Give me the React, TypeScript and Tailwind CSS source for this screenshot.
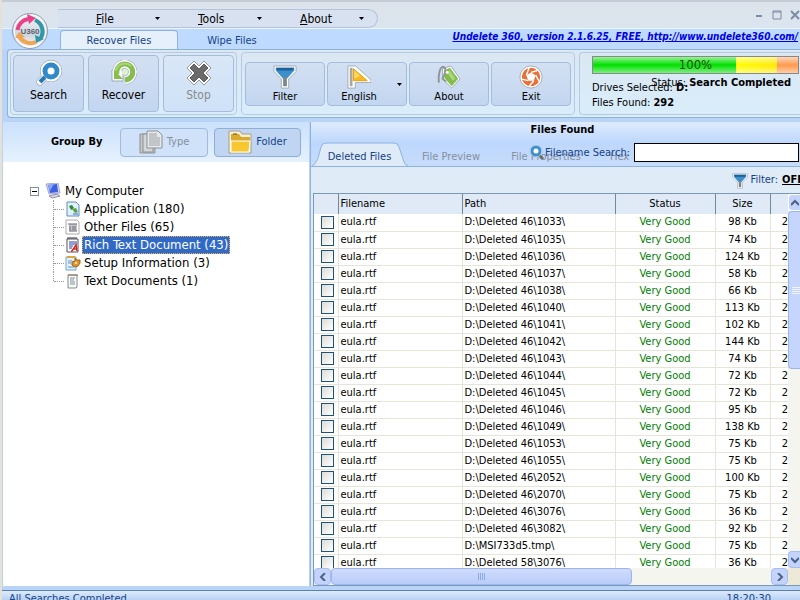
import React from "react";

type IconProps = { className?: string };

const files = [
  { path: "D:\\Deleted 46\\1033\\", size: 98 },
  { path: "D:\\Deleted 46\\1035\\", size: 74 },
  { path: "D:\\Deleted 46\\1036\\", size: 124 },
  { path: "D:\\Deleted 46\\1037\\", size: 58 },
  { path: "D:\\Deleted 46\\1038\\", size: 66 },
  { path: "D:\\Deleted 46\\1040\\", size: 113 },
  { path: "D:\\Deleted 46\\1041\\", size: 102 },
  { path: "D:\\Deleted 46\\1042\\", size: 144 },
  { path: "D:\\Deleted 46\\1043\\", size: 74 },
  { path: "D:\\Deleted 46\\1044\\", size: 72 },
  { path: "D:\\Deleted 46\\1045\\", size: 72 },
  { path: "D:\\Deleted 46\\1046\\", size: 95 },
  { path: "D:\\Deleted 46\\1049\\", size: 138 },
  { path: "D:\\Deleted 46\\1053\\", size: 75 },
  { path: "D:\\Deleted 46\\1055\\", size: 75 },
  { path: "D:\\Deleted 46\\2052\\", size: 100 },
  { path: "D:\\Deleted 46\\2070\\", size: 75 },
  { path: "D:\\Deleted 46\\3076\\", size: 36 },
  { path: "D:\\Deleted 46\\3082\\", size: 92 },
  { path: "D:\\MSI733d5.tmp\\", size: 75 },
  { path: "D:\\Deleted 58\\3076\\", size: 36 },
];

const Logo = () => (
  <svg className="h-10 w-10" viewBox="0 0 40 40">
    <defs>
      <linearGradient id="orb" x1="0" y1="0" x2="0" y2="1">
        <stop offset="0" stopColor="#f4f6f9" />
        <stop offset="0.6" stopColor="#cfd5de" />
        <stop offset="1" stopColor="#fafcff" />
      </linearGradient>
    </defs>
    <circle cx="20" cy="20" r="17.5" fill="url(#orb)" stroke="#8d9db4" />
    <circle cx="20" cy="20" r="16" fill="none" stroke="#fff" />
    <g fill="none" strokeWidth="4">
      <path d="M7.5 19a12.500 12.500 0 0 1 11-11" stroke="#e8418a" />
      <path d="M25 9a12.500 12.500 0 0 1 5 19" stroke="#2f97a6" />
      <path d="M26 31a13 13 0 0 1-17-6" stroke="#f0a552" />
    </g>
    <path d="M17 3l9 4-7 6z" fill="#e8418a" />
    <path d="M34 28l-8 4-1-8z" fill="#2f97a6" />
    <path d="M5 27l4-6 6 5z" fill="#f0a552" />
    <text x="20" y="23" textAnchor="middle" fontSize="8" fontWeight="bold" fill="#5a5f6e" fontFamily="Liberation Sans, sans-serif">
      U360
    </text>
  </svg>
);

const SearchIcon = ({ className }: IconProps) => (
  <svg className={className} viewBox="0 0 26 26">
    <g fill="none" stroke="#8fa0b4" strokeLinecap="round">
      <circle cx="15" cy="11" r="8" strokeWidth="6" />
      <path d="M9 17l-5 5" strokeWidth="7" />
    </g>
    <g fill="none" stroke="#fff" strokeLinecap="round">
      <circle cx="15" cy="11" r="8" strokeWidth="5" />
      <path d="M9 17l-5 5" strokeWidth="6" />
    </g>
    <circle cx="15" cy="11" r="6" fill="#fff" stroke="#3289c8" strokeWidth="5" />
    <path d="M9 17l-5 5" stroke="#2877b4" strokeWidth="4" />
  </svg>
);

// loupe used next to the filename search box
const LoupeIcon = () => (
  <svg className="h-4 w-4" viewBox="0 0 16 16">
    <path d="M10 10l4 4" stroke="#6b6b70" strokeWidth="3" />
    <circle cx="7" cy="6" r="4" fill="#fff" stroke="#3a93cf" strokeWidth="3" />
    <circle cx="7" cy="6" r="6" fill="none" stroke="#b5c6da" />
  </svg>
);

const RecoverIcon = ({ className }: IconProps) => (
  <svg className={className} viewBox="0 0 26 26">
    <path
      d="M6 14A8 8 0 1 1 14 20"
      fill="none"
      stroke="#9aa7b3"
      strokeWidth="9"
    />
    <path d="M1 10v11h11V10z" fill="#fff" stroke="#9aa7b3" />
    <path d="M6 14A8 8 0 1 1 14 20" fill="none" stroke="#fff" strokeWidth="8" />
    <path d="M6 14A8 8 0 1 1 14 20" fill="none" stroke="#86bd4c" strokeWidth="5" />
    <path d="M5 11A9 9 0 0 1 20 6" fill="none" stroke="#a8d57c" strokeWidth="2" />
    <path d="M3 10l9 9H3z" fill="#86bd4c" />
    <circle cx="14" cy="12" r="3" fill="#dff0d0" />
  </svg>
);

const StopIcon = ({ className }: IconProps) => (
  <svg className={className} viewBox="0 0 26 26">
    <path d="M8 1l5 5 5-5 7 7-5 5 5 5-7 7-5-5-5 5-7-7 5-5-5-5z" fill="#fff" stroke="#999" strokeLinejoin="round" />
    <path d="M8 4l5 5 5-5 4 4-5 5 5 5-4 4-5-5-5 5-4-4 5-5-5-5z" fill="#6b6b6b" stroke="#5c5c5c" />
  </svg>
);

const FunnelIcon = ({ className }: IconProps) => (
  <svg className={className} viewBox="0 0 26 26">
    <path d="M1 1h24v6l-8 8v10H9V15L1 7z" fill="#fff" stroke="#a3a9b0" />
    <path d="M3 3h20v3l-8 9h-4L3 6z" fill="#3b8fca" />
    <path d="M3 3h20l-2 3H5z" fill="#1c5f9b" />
    <path d="M11 13h4v10h-4z" fill="#79868f" />
  </svg>
);

const FlagIcon = ({ className }: IconProps) => (
  <svg className={className} viewBox="0 0 26 26">
    <path d="M1 1h8l17 15v3H9v6H1z" fill="#fff" stroke="#a3a9b0" />
    <path d="M3 3h3v20H3z" fill="#a9a9a2" />
    <path d="M7 4l15 13H7z" fill="#fbb81c" stroke="#e09b13" />
    <path d="M8 6l6 6-6 3z" fill="#ffdb63" />
  </svg>
);

const TagIcon = ({ className }: IconProps) => (
  <svg className={className} viewBox="0 0 26 26">
    <path d="M6 4l9-3 10 14-9 10L6 15z" fill="#fff" stroke="#9aa7b3" />
    <path d="M8 6l6-3 9 12-7 8L8 14z" fill="#83bc4d" />
    <path d="M10 7l4-1 6 9-3 2z" fill="#a9d67d" />
    <path d="M2 19C1 12 3 1 7 2s1 9-1 13l4 3" fill="none" stroke="#8d9399" strokeWidth="2" />
    <circle cx="11" cy="8" r="1.5" fill="#fff" />
  </svg>
);

const ExitIcon = ({ className }: IconProps) => (
  <svg className={className} viewBox="0 0 26 26">
    <circle cx="13" cy="13" r="12" fill="#fff" stroke="#a3a9b0" />
    <circle cx="13" cy="13" r="10" fill="#e8713a" />
    <path d="M13 8l5 3-2 6h-6l-2-6z" fill="#fff" />
    <g stroke="#fff" strokeWidth="1.5">
      <path d="M13 8l7-2M18 11l4 7M16 17l-5 6M10 17l-8-2M8 11l3-8" />
    </g>
  </svg>
);

const TypeIcon = () => (
  <svg className="h-6 w-6" viewBox="0 0 24 24" stroke="#8d9194">
    <path d="M1 7V4h8v4h7v15H1z" fill="#c4c7c9" />
    <path d="M4 4h10v18H4z" fill="#d4d7d9" />
    <path d="M8 1h11l4 4v13H8z" fill="#e6e8ea" />
    <path d="M10 3h8v4h3v9H10z" fill="#c2c5c8" stroke="none" />
  </svg>
);

const FolderIcon = () => (
  <svg className="h-6 w-6" viewBox="0 0 24 24">
    <path d="M1 1h11l2 3h9v19H1z" fill="#f7efd8" stroke="#a89f86" />
    <path d="M3 4h8l2 3h9v4H3z" fill="#dba92c" />
    <path d="M5 4h4" stroke="#66551e" />
    <path d="M3 11h19l-1 11H3z" fill="#f8c62f" stroke="#fff" />
  </svg>
);

const ComputerIcon = () => (
  <svg className="h-4 w-4" viewBox="0 0 16 16">
    <path d="M1 1l12-1 2 10-11 1z" fill="#c9d3ef" stroke="#a2abd4" />
    <path d="M3 2l9-1 1 8-8 1z" fill="#3c5fe0" />
    <path d="M3 2l6-1-4 7z" fill="#86a5fb" />
    <path d="M4 13l8-2 3 2-8 2z" fill="#d9d9e2" stroke="#8f90a5" />
  </svg>
);

const AppIcon = () => (
  <svg className="h-4 w-4" viewBox="0 0 16 16">
    <path d="M2 1h9l3 3v11H2z" fill="#e2efff" stroke="#5f8cc4" />
    <path d="M4 5l3-1 2 3-3 2z" fill="#2c8a3a" />
    <path d="M7 8l4-1 2 4-3 1z" fill="#5aa63d" />
    <path d="M8 12h5v2H8z" fill="#8baede" />
  </svg>
);

const OtherIcon = () => (
  <svg className="h-4 w-4" viewBox="0 0 16 16">
    <path d="M1 1h11l2 2v12H1z" fill="#fff" stroke="#aaa" />
    <path d="M4 5h8v7H4z" fill="#c5c7d0" />
    <path d="M3 5h9M5 7v4M8 7v4M10 7v4M4 12h8" stroke="#6d6771" />
  </svg>
);

const RichIcon = () => (
  <svg className="h-4 w-4" viewBox="0 0 16 16">
    <path d="M2 2h11v13H2z" fill="#fff" stroke="#55535c" />
    <path d="M3 0v2M5 0v2M7 0v2M9 0v2M11 0v2" stroke="#333" />
    <path d="M4 5h8M4 7h8M4 9h4M4 11h3" stroke="#2b3bac" />
    <path d="M6 14h1l4-6 1 6M8 12h4" fill="none" stroke="#d3281e" strokeWidth="1.5" />
  </svg>
);

const SetupIcon = () => (
  <svg className="h-4 w-4" viewBox="0 0 16 16">
    <path d="M1 2h10v13H1z" fill="#e0effc" stroke="#76a5cf" />
    <path d="M2 2h8" stroke="#dca634" strokeWidth="2" />
    <path d="M3 6h4M3 8h3M3 12h6" stroke="#6295ca" />
    <path d="M10 3l2 2 3 0 0 3-2 3-3 1-3-2 0-3 3-1z" fill="#e69322" stroke="#9b641c" />
    <circle cx="11" cy="8" r="1" fill="#fff" />
  </svg>
);

const TextIcon = () => (
  <svg className="h-4 w-4" viewBox="0 0 16 16">
    <path d="M3 2h9v12l-1 1H3z" fill="#fbfaf0" stroke="#7d8a99" />
    <path d="M4 1v2M6 1v2M8 1v2M10 1v2M12 1v2" stroke="#8a7a4a" />
    <path d="M5 5h5M5 7h4M5 9h5M5 11h5" stroke="#7b8fa5" />
  </svg>
);

const Caret = () => (
  <svg className="h-[3px] w-[5px]" viewBox="0 0 5 3">
    <path d="M0 0h5L2.5 3z" fill="#000" />
  </svg>
);

const Chevron = ({ d }: { d: string }) => (
  <svg className="h-2 w-2 shrink-0" viewBox="0 0 8 8">
    <path d={d} fill="none" stroke="#4d6185" strokeWidth="2" />
  </svg>
);

const menus = [
  { key: "F", rest: "ile" },
  { key: "T", rest: "ools" },
  { key: "A", rest: "bout" },
];

const leftTools = [
  { label: "Search", icon: SearchIcon, disabled: false },
  { label: "Recover", icon: RecoverIcon, disabled: false },
  { label: "Stop", icon: StopIcon, disabled: true },
];

const rightTools = [
  { label: "Filter", icon: FunnelIcon },
  { label: "English", icon: FlagIcon, menu: true },
  { label: "About", icon: TagIcon },
  { label: "Exit", icon: ExitIcon },
];

const tree = [
  { label: "Application (180)", icon: AppIcon },
  { label: "Other Files (65)", icon: OtherIcon },
  { label: "Rich Text Document (43)", icon: RichIcon, selected: true },
  { label: "Setup Information (3)", icon: SetupIcon },
  { label: "Text Documents (1)", icon: TextIcon },
];

const TitleBar = () => (
  <header className="flex h-7 shrink-0 items-end border-t-2 border-[#c5ccd6] bg-gradient-to-b from-[#dde3ea] to-[#dbe5ef]">
    <nav className="ml-14 flex h-[19px] w-[320px] items-center rounded-r-full border border-l-0 border-[#b3c3dc] bg-[#d7e1f0] text-xs">
      {menus.map((menu) => (
        <button key={menu.key} className="flex w-[102px] shrink-0 items-center justify-between pl-[38px]">
          <span>
            <u>{menu.key}</u>
            {menu.rest}
          </span>
          <Caret />
        </button>
      ))}
    </nav>
    <div className="mb-2 ml-auto flex gap-2 text-[#7d8ba6]">
      <button aria-label="Minimize">
        <svg className="h-[10px] w-[10px]" viewBox="0 0 10 10">
          <path d="M2 6h6" stroke="currentColor" strokeWidth="2" />
        </svg>
      </button>
      <button aria-label="Maximize">
        <svg className="h-[10px] w-[10px]" viewBox="0 0 10 10">
          <path d="M1 1h8v8H1zM1 2h8" fill="none" stroke="currentColor" />
        </svg>
      </button>
      <button aria-label="Close">
        <svg className="h-[10px] w-[10px]" viewBox="0 0 10 10">
          <path d="M1 1l8 8M9 1l-8 8" stroke="currentColor" strokeWidth="2" />
        </svg>
      </button>
    </div>
  </header>
);

const RibbonTabs = () => (
  <div className="flex h-[21px] shrink-0 items-end border-t border-[#eaf4ff] bg-[#bfdaff] pl-[58px] text-[11px] text-[#15428b]">
    <button className="h-[19px] w-[118px] shrink-0 rounded-t border border-b-0 border-[#8db2e3] bg-[#e6f0fa] pt-[2px]">Recover Files</button>
    <button className="h-[19px] w-[108px] shrink-0 pt-[3px]">Wipe Files</button>
    <a
      href="http://www.undelete360.com/"
      className="ml-auto self-start pr-[2px] text-[10px] leading-4 font-bold whitespace-nowrap text-[#0000e0] italic underline">
      Undelete 360, version 2.1.6.25, FREE, http://www.undelete360.com/
    </a>
  </div>
);

const Ribbon = () => (
  <div className="flex h-[69px] shrink-0 gap-1 overflow-hidden rounded-l border border-r-0 border-[#8db2d8] bg-gradient-to-b from-[#dbe7f3] to-[#d9edfb] py-[2px] pl-[2px] text-xs">
    <div className="flex shrink-0 gap-1 rounded border border-[#b4cbe3] p-[2px]">
      {leftTools.map(({ label, icon: Icon, disabled }) => (
        <button
          key={label}
          disabled={disabled}
          className="flex w-[71px] flex-col items-center rounded border border-[#a4bddd] bg-gradient-to-b from-[#d3e0f2] to-[#c3d6f0] pt-1 disabled:from-[#d9e7f7] disabled:to-[#cfe2f7] disabled:text-[#8a8a8a]">
          <Icon className="h-[26px] w-[26px]" />
          <span className="leading-[18px]">{label}</span>
        </button>
      ))}
    </div>
    <div className="flex shrink-0 items-center gap-[2px] rounded border border-[#b4cbe3] px-[3px]">
      {rightTools.map(({ label, icon: Icon, menu }) => (
        <button
          key={label}
          className="relative flex h-11 w-20 flex-col items-center rounded border border-[#a4bddd] bg-gradient-to-b from-[#d3e0f2] to-[#c3d6f0] pt-[2px] text-[11px]">
          <Icon className={menu ? "mr-4 h-6 w-6" : "h-6 w-6"} />
          <span className={menu ? "pr-4 leading-4" : "leading-4"}>{label}</span>
          {menu && (
            <span className="absolute top-5 right-1">
              <Caret />
            </span>
          )}
        </button>
      ))}
    </div>
    <div className="min-w-0 flex-1 rounded-l border border-r-0 border-[#b4cbe3] pt-[3px] pr-px pl-3 text-[11px]">
      <div className="flex h-[18px] items-center justify-center border border-[#888] bg-[linear-gradient(to_bottom,#ffffff99,#ffffff00_50%,#ffffff80),linear-gradient(to_right,#00e000_70%,#ffff00_70%,#ffe800_90%,#ff9a50_90%)] text-[13px] text-[#234d12]">
        100%
      </div>
      <div className="relative pt-[6px] leading-[15px] whitespace-nowrap">
        <p>
          Drives Selected: <b>D:</b>
        </p>
        <p>
          Files Found: <b>292</b>
        </p>
        <p className="absolute top-px right-2">
          Status: <b>Search Completed</b>
        </p>
      </div>
    </div>
  </div>
);

const GroupPanel = () => (
  <aside className="flex w-[306px] shrink-0 flex-col bg-white">
    <div className="flex h-10 shrink-0 items-center bg-gradient-to-b from-[#cbe1fd] to-[#e6f1fd] pr-2 text-[11px]">
      <b className="ml-12 w-[69px]">Group By</b>
      <button disabled className="flex h-[29px] w-[88px] items-center justify-center gap-1 rounded border border-[#9fbbdc] bg-[#cfe2f9] text-[#858f9c]">
        <TypeIcon />
        Type
      </button>
      <button className="ml-[6px] flex h-[29px] w-[87px] items-center justify-center gap-1 rounded border border-[#8eaed6] bg-[#bfd5f1] text-[#15428b]">
        <FolderIcon />
        Folder
      </button>
    </div>
    <div className="pt-5 pl-[27px] text-[13px]">
      <div className="flex h-[18px] items-center gap-1">
        <span className="mr-[2px] flex h-[9px] w-[9px] items-center justify-center border border-[#7f8fa6]">
          <span className="h-px w-[5px] bg-black" />
        </span>
        <ComputerIcon />
        My Computer
      </div>
      <ul className="ml-[23px]">
        {tree.map(({ label, icon: Icon, selected }) => (
          <li key={label} className="group flex h-[18px] items-center">
            <span className="h-full w-px border-l border-dotted border-[#999] group-last:h-[9px] group-last:self-start" />
            <span className="mr-px w-[10px] border-t border-dotted border-[#999]" />
            <Icon />
            <span
              className={
                selected
                  ? "ml-px border border-dotted border-[#e8b05a] bg-[#316ac5] pr-px pl-px leading-4 text-white"
                  : "ml-[3px] leading-4"
              }>
              {label}
            </span>
          </li>
        ))}
      </ul>
    </div>
  </aside>
);

const FileTable = () => (
  <div className="min-w-0 flex-1 overflow-hidden bg-white">
    <table className="w-full table-fixed border-collapse text-[11px]">
      <colgroup>
        <col className="w-6" />
        <col className="w-[124px]" />
        <col />
        <col className="w-[100px]" />
        <col className="w-[55px]" />
        <col className="w-[18px]" />
      </colgroup>
      <thead>
        <tr className="h-5 bg-[#dfeaf6] leading-4 [&>th]:border-r [&>th]:border-[#73879e] [&>th]:p-0 [&>th]:font-normal">
          <th />
          <th className="text-left">
            <span className="pl-[2px]">Filename</span>
          </th>
          <th className="text-left">
            <span className="pl-[2px]">Path</span>
          </th>
          <th>Status</th>
          <th>Size</th>
          <th className="border-r-0!" />
        </tr>
      </thead>
      <tbody>
        {files.map((file, index) => (
          <tr key={index} className="h-[17px] border-b border-[#e6e6d8] leading-4 [&>td]:border-r [&>td]:border-[#e6e6d8] [&>td]:p-0">
            <td>
              <input
                type="checkbox"
                aria-label={`Select ${file.path}eula.rtf`}
                className="mr-1 ml-auto block h-[13px] w-[13px] appearance-none border border-[#1c5180] bg-gradient-to-br from-[#dcdcd7] to-white"
              />
            </td>
            <td>
              <span className="pl-[2px]">eula.rtf</span>
            </td>
            <td className="whitespace-nowrap">
              <span className="pl-[2px]">{file.path}</span>
            </td>
            <td className="text-center text-[#008000]">Very Good</td>
            <td className="text-center">{file.size} Kb</td>
            <td className="border-r-0! text-right">2</td>
          </tr>
        ))}
      </tbody>
    </table>
  </div>
);

const VerticalScroll = () => (
  <div className="flex w-3 shrink-0 flex-col bg-[#f5f5f0]">
    <button aria-label="Scroll up" className="flex h-[17px] shrink-0 items-center justify-center rounded-l border border-r-0 border-white bg-[#c3d3fb]">
      <Chevron d="M0 6l4-4 4 4" />
    </button>
    <div className="flex h-[158px] shrink-0 flex-col items-end justify-center gap-px rounded-l border border-r-0 border-[#9db5ee] bg-[#c5d5fc]">
      {[0, 1, 2, 3].map((line) => (
        <span key={line} className="h-px w-2 bg-[#eef4fe]" />
      ))}
    </div>
    <button aria-label="Scroll down" className="mt-auto flex h-[17px] shrink-0 items-center justify-center rounded-l border border-r-0 border-[#a9bef0] bg-[#c3d3fb]">
      <Chevron d="M0 2l4 4 4-4" />
    </button>
  </div>
);

const HorizontalScroll = () => (
  <div className="flex h-[17px] shrink-0 bg-[#f5f5f0]">
    <button aria-label="Scroll left" className="flex w-[17px] shrink-0 items-center justify-center rounded border border-[#a9bef0] bg-[#c3d3fb]">
      <Chevron d="M6 0L2 4l4 4" />
    </button>
    <div className="flex w-[62%] items-center justify-center gap-px rounded border border-[#9db5ee] bg-gradient-to-b from-[#cfdcfd] to-[#b9cbf8]">
      {[0, 1, 2, 3].map((line) => (
        <span key={line} className="h-[7px] w-px bg-[#8caae6]" />
      ))}
    </div>
    <button aria-label="Scroll right" className="ml-auto flex w-[17px] shrink-0 items-center justify-center rounded border border-[#a9bef0] bg-[#c3d3fb]">
      <Chevron d="M2 0l4 4-4 4" />
    </button>
    <div className="w-3 shrink-0 bg-[#ece9d8]" />
  </div>
);

const FilesPanel = () => (
  <section className="ml-px flex min-w-0 flex-1 flex-col border-l border-[#8db2e3] bg-[#dfebf7]">
    <h2 className="h-[21px] shrink-0 bg-gradient-to-b from-[#dfecfe] to-[#bdd7fd] pl-[14px] text-center text-[11px] leading-[15px] font-bold">
      Files Found
    </h2>
    <div className="relative flex h-6 shrink-0 items-end border-b border-[#8db2e3] bg-gradient-to-b from-[#bdd7fd] to-[#c6dcfa] text-[11px] text-[#8590a0]">
      <button className="relative h-6 w-[97px] shrink-0 pt-[6px]">
        <svg className="absolute inset-0 h-6 w-full" viewBox="0 0 97 24">
          <path d="M1 24C6 22 8 13 10 5Q11 1 15 1H83Q87 1 88 5L93 20Q94 23 97 24" fill="#dfebf7" stroke="#8db2e3" />
        </svg>
        <span className="relative text-[#15428b]">Deleted Files</span>
      </button>
      <button className="h-6 w-[86px] shrink-0 pt-[6px]">File Preview</button>
      <button className="h-6 w-[104px] shrink-0 pt-[6px]">File Properties</button>
      <button className="h-6 shrink-0 pt-[6px] pl-3">Hex</button>
      {/* search box floats over the tabs */}
      <div className="absolute top-0 right-px flex items-center">
        <LoupeIcon />
        <label htmlFor="filename-search" className="mr-1 pt-px whitespace-nowrap text-[#15428b]">
          Filename Search:
        </label>
        <input id="filename-search" className="h-[19px] w-[165px] border border-black bg-white px-1 text-black" />
      </div>
    </div>
    <div className="flex h-[26px] shrink-0 items-center justify-end gap-[2px] overflow-hidden pt-px text-[11px] text-[#15428b]">
      <FunnelIcon className="h-4 w-4" />
      Filter:
      <button className="-mr-1 ml-[2px] font-bold text-black underline">OFF</button>
    </div>
    <div className="ml-[2px] flex min-h-0 flex-1 flex-col border-t border-b border-l border-[#7c98b9]">
      <div className="flex min-h-0 flex-1 overflow-hidden">
        <FileTable />
        <VerticalScroll />
      </div>
      <HorizontalScroll />
    </div>
  </section>
);

export default function App() {
  return (
    <div className="relative flex h-screen w-full flex-col overflow-hidden border-l-2 border-[#e3e1d8] bg-[#b9d4f6] font-['DejaVu_Sans_Condensed','DejaVu_Sans',sans-serif] text-black">
      <TitleBar />
      <RibbonTabs />
      <div className="flex shrink-0 flex-col pl-[5px]">
        <Ribbon />
      </div>
      <main className="flex min-h-0 flex-1 pt-1 pl-px">
        <GroupPanel />
        <FilesPanel />
      </main>
      <footer className="mt-1 flex h-[10px] shrink-0 justify-between overflow-hidden border-t border-[#5a7fb0] bg-gradient-to-b from-[#dceafc] to-[#b9d3f5] pr-[29px] pl-[7px] text-[11px] leading-[15px] text-[#15428b]">
        <span>All Searches Completed</span>
        <span>18:20:30</span>
      </footer>
      {/* application orb overlaps the title bar and the ribbon tabs */}
      <button aria-label="Application menu" className="absolute top-[11px] left-2">
        <Logo />
      </button>
    </div>
  );
}
